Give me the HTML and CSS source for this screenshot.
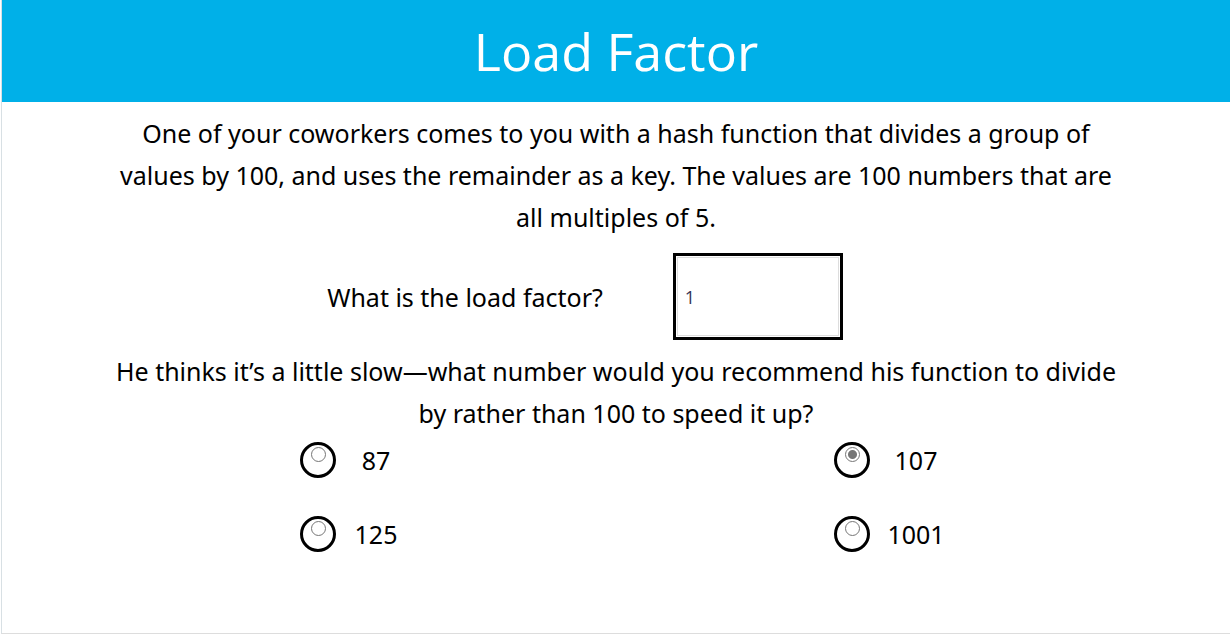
FILE: index.html
```html
<!DOCTYPE html>
<html lang="en">
<head>
<meta charset="utf-8">
<title>Load Factor</title>
<link rel="stylesheet" href="styles.css">
</head>
<body>
<main class="slide">
  <header class="banner"><h1>Load Factor</h1></header>
  <form class="quiz">
    <p class="prompt">One of your coworkers comes to you with a hash function that divides a group of values by 100, and uses the remainder as a key. The values are 100 numbers that are all multiples of 5.</p>
    <div class="field">
      <label for="factor">What is the load factor?</label>
      <span class="frame"><input id="factor" class="answer" type="text" value="1"></span>
    </div>
    <p class="prompt">He thinks it’s a little slow—what number would you recommend his function to divide by rather than 100 to speed it up?</p>
    <div class="options">
      <label class="option"><span class="ring"><input type="radio" name="divisor"></span><span class="value">87</span></label>
      <label class="option"><span class="ring"><input type="radio" name="divisor" checked></span><span class="value">107</span></label>
      <label class="option"><span class="ring"><input type="radio" name="divisor"></span><span class="value">125</span></label>
      <label class="option"><span class="ring"><input type="radio" name="divisor"></span><span class="value">1001</span></label>
    </div>
  </form>
</main>
</body>
</html>
```

FILE: styles.css
```css
* { box-sizing: border-box; }
body {
  margin: 0;
  background: #fff;
  color: #000;
  font: 25px/42px "Noto Sans", "Open Sans", sans-serif;
}
.slide {
  min-height: calc(100vh - 1px);
  margin-left: 1px;
  border-left: 1px solid #d8e0e4;
  border-bottom: 1px solid #ddd;
}
.banner {
  padding: 16px 0;
  background: #00b0e8;
  color: #fff;
  text-align: center;
}
h1 {
  margin: 0;
  font-family: "Open Sans", sans-serif;
  font-size: 52px;
  font-weight: 400;
  line-height: 70px;
}
.quiz { padding: 10px 104px 0; }
.prompt {
  margin: 0;
  text-align: center;
}
.field {
  display: flex;
  align-items: center;
  justify-content: center;
  gap: 70px;
  margin: 15px 0 10px;
  padding-right: 62px;
}
.frame {
  display: flex;
  width: 170px;
  height: 87px;
  padding: 1px;
  border: 3px solid #000;
}
.answer {
  width: 100%;
  border: 1px solid #ddd;
  padding: 0 7px;
  color: #335;
  font: 18px "Open Sans", sans-serif;
}
.options {
  display: grid;
  grid-template-columns: 534px 1fr;
  row-gap: 32px;
  padding: 5px 0 0 194px;
}
.option {
  display: flex;
  align-items: center;
  gap: 12px;
}
.ring {
  display: flex;
  justify-content: center;
  width: 36px;
  height: 36px;
  padding-top: 2px;
  border: 3px solid #000;
  border-radius: 50%;
}
.ring input {
  appearance: none;
  width: 15px;
  height: 15px;
  margin: 0;
  border: 1px solid #767676;
  border-radius: 50%;
}
.ring input:checked { background: radial-gradient(circle, #767676 4px, #fff 5px); }
.value {
  width: 56px;
  text-align: center;
}
.option:nth-child(even) .value { width: 68px; }
```
